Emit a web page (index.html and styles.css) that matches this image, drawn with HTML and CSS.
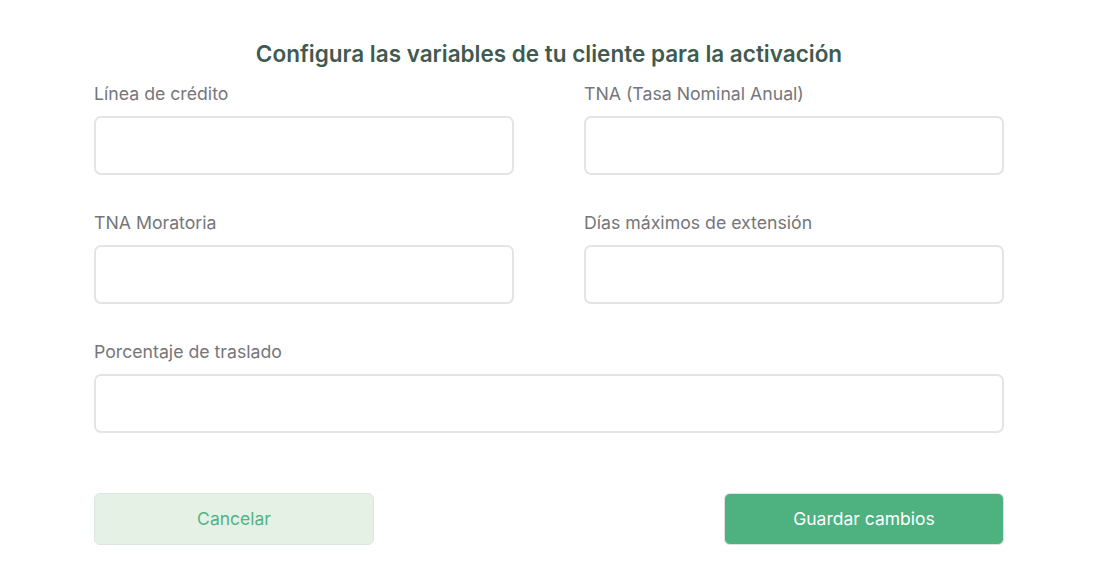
FILE: index.html
```html
<!DOCTYPE html>
<html lang="es">
<head>
<meta charset="utf-8">
<link rel="stylesheet" href="styles.css">
</head>
<body>
<div class="page">
  <h1 class="title">Configura las variables de tu cliente para la activación</h1>
  <div class="grid">
    <div class="field">
      <label class="label">Línea de crédito</label>
      <input class="input" type="text">
    </div>
    <div class="field">
      <label class="label">TNA (Tasa Nominal Anual)</label>
      <input class="input" type="text">
    </div>
    <div class="field">
      <label class="label">TNA Moratoria</label>
      <input class="input" type="text">
    </div>
    <div class="field">
      <label class="label">Días máximos de extensión</label>
      <input class="input" type="text">
    </div>
    <div class="field full">
      <label class="label">Porcentaje de traslado</label>
      <input class="input" type="text">
    </div>
  </div>
  <div class="actions">
    <button class="btn btn-cancel">Cancelar</button>
    <button class="btn btn-save">Guardar cambios</button>
  </div>
</div>
</body>
</html>
```

FILE: styles.css
```css
* { box-sizing: border-box; }
html, body { margin: 0; padding: 0; background: #fff; }
body { font-family: Inter, "Noto Sans", sans-serif; }
.page {
  width: 910px;
  margin-left: 94px;
  padding-top: 39px;
}
.title {
  margin: 0;
  text-align: center;
  font-size: 22.5px;
  line-height: 30px;
  font-weight: 600;
  color: #3f5b51;
}
.grid {
  display: grid;
  grid-template-columns: 420px 420px;
  column-gap: 70px;
  row-gap: 36px;
  margin-top: 13px;
}
.field { display: flex; flex-direction: column; gap: 10px; }
.field.full { grid-column: 1 / -1; }
.label {
  font-size: 17.7px;
  line-height: 24px;
  color: #75767a;
}
.input {
  height: 59px;
  width: 100%;
  border: 2px solid #e4e4e8;
  border-radius: 7px;
  background: #fff;
  outline: none;
  font: inherit;
}
.actions {
  display: flex;
  justify-content: space-between;
  margin-top: 60px;
}
.btn {
  width: 280px;
  height: 52px;
  padding: 0 0 2px;
  border-radius: 6px;
  font-family: Inter, "Noto Sans", sans-serif;
  font-size: 17.5px;
  cursor: pointer;
}
.btn-cancel {
  background: #e6f1e6;
  border: 1px solid #dde6de;
  color: #52b283;
}
.btn-save {
  background: #4db280;
  border: 1px solid #d8e4dc;
  color: #fff;
}
```
